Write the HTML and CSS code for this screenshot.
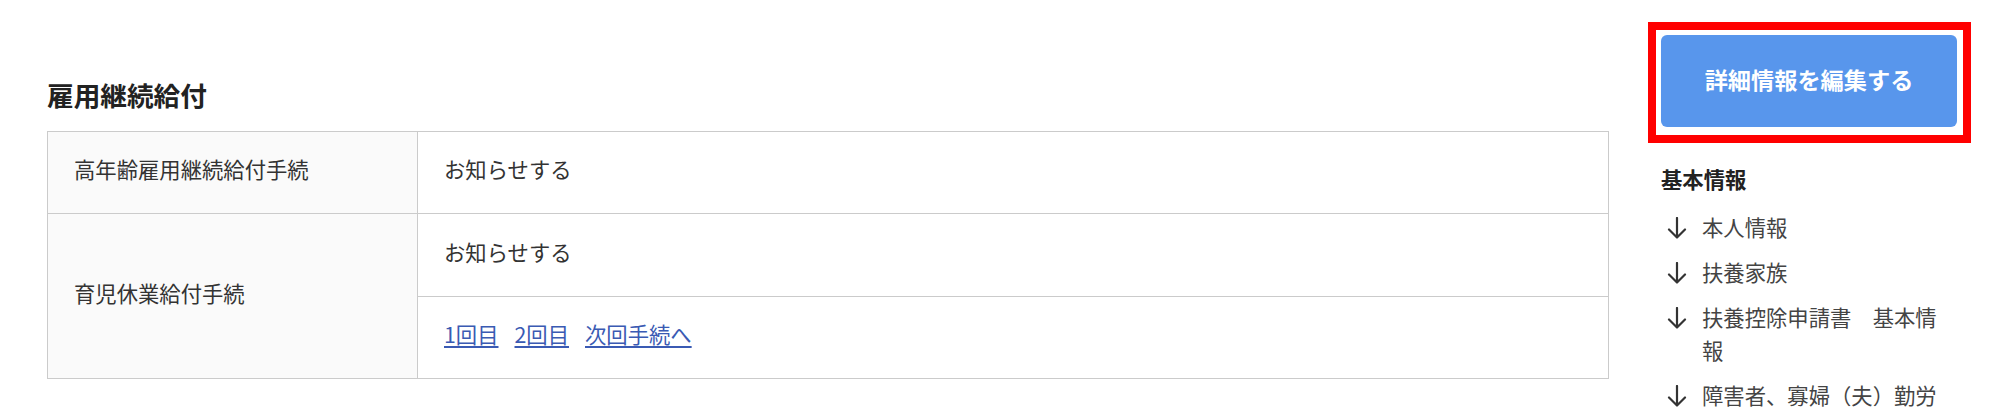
FILE: index.html
```html
<!DOCTYPE html>
<html lang="ja">
<head>
<meta charset="utf-8">
<title>雇用継続給付</title>
<link rel="stylesheet" href="styles.css">
</head>
<body>
<div class="page">
  <main class="content">
    <h2 class="section-title">雇用継続給付</h2>
    <div class="info-grid">
      <div class="cell head">高年齢雇用継続給付手続</div>
      <div class="cell value">お知らせする</div>
      <div class="cell head span2">育児休業給付手続</div>
      <div class="cell value">お知らせする</div>
      <div class="cell value links">
        <a href="#">1回目</a><a href="#">2回目</a><a href="#">次回手続へ</a>
      </div>
    </div>
  </main>
  <aside class="sidebar">
    <div class="edit-wrap">
      <button class="edit-btn" type="button">詳細情報を編集する</button>
    </div>
    <h3 class="nav-title">基本情報</h3>
    <ul class="nav-list">
      <li><svg class="arrow" viewBox="0 0 20 22" width="20" height="22"><path d="M10 1V20M2 12.5L10 20.5L18 12.5" fill="none" stroke="#333" stroke-width="2.2" stroke-linecap="round" stroke-linejoin="round"/></svg><span class="nav-text">本人情報</span></li>
      <li><svg class="arrow" viewBox="0 0 20 22" width="20" height="22"><path d="M10 1V20M2 12.5L10 20.5L18 12.5" fill="none" stroke="#333" stroke-width="2.2" stroke-linecap="round" stroke-linejoin="round"/></svg><span class="nav-text">扶養家族</span></li>
      <li><svg class="arrow" viewBox="0 0 20 22" width="20" height="22"><path d="M10 1V20M2 12.5L10 20.5L18 12.5" fill="none" stroke="#333" stroke-width="2.2" stroke-linecap="round" stroke-linejoin="round"/></svg><span class="nav-text">扶養控除申請書　基本情報</span></li>
      <li><svg class="arrow" viewBox="0 0 20 22" width="20" height="22"><path d="M10 1V20M2 12.5L10 20.5L18 12.5" fill="none" stroke="#333" stroke-width="2.2" stroke-linecap="round" stroke-linejoin="round"/></svg><span class="nav-text">障害者、寡婦（夫）勤労学生</span></li>
    </ul>
  </aside>
</div>
</body>
</html>
```

FILE: styles.css
```css
html, body {
  margin: 0;
  padding: 0;
  background: #fff;
}

body {
  font-family: "Noto Sans CJK JP", "Noto Sans", sans-serif;
  color: #333;
  overflow: hidden;
}

.page {
  display: flex;
  align-items: flex-start;
  padding-left: 47px;
  gap: 52px;
}

.content {
  width: 1562px;
  flex: none;
  padding-top: 75px;
}

.section-title {
  margin: 0 0 16px;
  font-size: 26.67px;
  line-height: 40px;
  font-weight: 700;
  color: #222;
}

.info-grid {
  display: grid;
  grid-template-columns: 370px 1fr;
  grid-template-rows: 82px 83px 82px;
  border-top: 1px solid #cbcbcb;
  border-left: 1px solid #cbcbcb;
}

.cell {
  display: flex;
  align-items: center;
  padding: 0 26px 7px;
  border-right: 1px solid #cbcbcb;
  border-bottom: 1px solid #cbcbcb;
  font-size: 21.33px;
  line-height: 32px;
  color: #333;
}

.head {
  background: #fafafa;
}

.span2 {
  grid-column: 1;
  grid-row: 2 / 4;
}

.links a {
  color: #3a5ab3;
  text-decoration: underline;
  text-underline-offset: 3px;
  margin-right: 16px;
}

.sidebar {
  width: 296px;
  flex: none;
  padding-top: 35px;
}

.edit-wrap {
  position: relative;
}

.edit-wrap::after {
  content: "";
  position: absolute;
  left: -13px;
  top: -13px;
  right: -14px;
  bottom: -16px;
  border: 8px solid #ff0000;
  pointer-events: none;
}

.edit-btn {
  display: block;
  width: 296px;
  height: 92px;
  border: 0;
  border-radius: 6px;
  background: #5896ec;
  color: #fff;
  font-family: "Noto Sans CJK JP", sans-serif;
  font-size: 23.2px;
  font-weight: 700;
  line-height: 1;
  padding: 0 0 3px;
  cursor: pointer;
}

.nav-title {
  margin: 36px 0 0;
  font-size: 21.33px;
  line-height: 32px;
  font-weight: 700;
  color: #222;
}

.nav-list {
  list-style: none;
  margin: 15px 0 0;
  padding: 0;
}

.nav-list li {
  display: flex;
  align-items: flex-start;
  margin-bottom: 12px;
  font-size: 21.33px;
  line-height: 33px;
  color: #444;
}

.arrow {
  flex: none;
  margin: 7px 15px 0 6px;
}

.nav-text {
  flex: 1;
  min-width: 0;
  max-width: 250px;
}
```
